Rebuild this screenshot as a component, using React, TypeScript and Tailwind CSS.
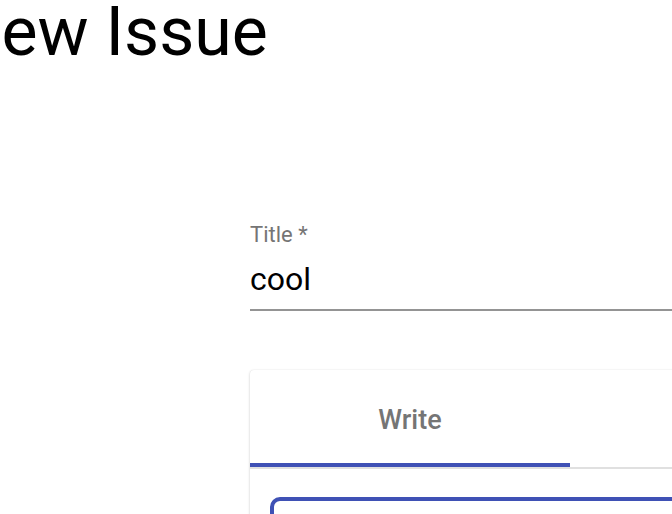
export default function App() {
  return (
    <div className="w-[672px] h-[514px] overflow-hidden bg-white font-['Roboto',sans-serif]">
      <h1 className="-ml-[47px] text-[68px] leading-[64px] font-normal text-black whitespace-nowrap">
        New Issue
      </h1>

      <div className="pl-[250px] mt-[158px]">
        <div className="w-[700px]">
          <label className="block text-[22px] leading-[26px] text-[#757575]">Title *</label>
          <div className="mt-[11px] pb-[10px] border-b-2 border-[#949494] text-[32px] leading-[40px] text-black">
            cool
          </div>
        </div>

        <div className="mt-[59px] w-[700px] bg-white rounded-sm shadow-[0_1px_3px_rgba(0,0,0,0.18),0_0_1px_rgba(0,0,0,0.12)]">
          <div className="flex border-b-2 border-[#e0e0e0]">
            <div className="w-[320px] h-[97px] flex flex-col">
              <div className="flex-1 flex items-center justify-center pt-[7px] text-[27px] font-medium text-[#757575]">
                Write
              </div>
              <div className="h-[4px] bg-[#3f51b5]" />
            </div>
            <div className="w-[320px] h-[97px] flex items-center justify-center pt-[3px] text-[27px] font-medium text-[#757575]">
              Preview
            </div>
          </div>
          <div className="pt-[28px] pl-[20px]">
            <div className="h-[120px] border-4 border-[#3f51b5] rounded-[10px]" />
          </div>
        </div>
      </div>
    </div>
  );
}
